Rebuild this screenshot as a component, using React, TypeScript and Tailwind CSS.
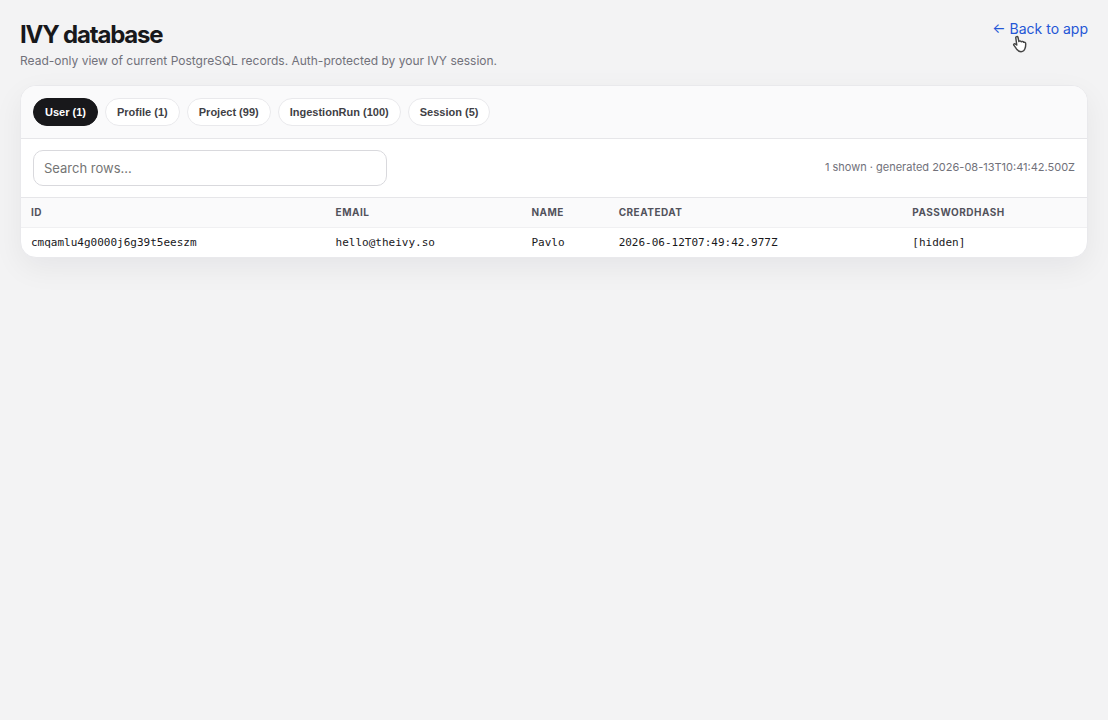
import React, { useState } from 'react';

const tabs = [
  { name: 'User', count: 1 },
  { name: 'Profile', count: 1 },
  { name: 'Project', count: 99 },
  { name: 'IngestionRun', count: 100 },
  { name: 'Session', count: 5 },
];

const columns = ['id', 'email', 'name', 'createdAt', 'passwordHash'];

const rows = [
  ['cmqamlu4g0000j6g39t5eeszm', 'hello@theivy.so', 'Pavlo', '2026-06-12T07:49:42.977Z', '[hidden]'],
];

const HandCursor: React.FC = () => (
  <svg
    className="pointer-events-none absolute left-[18px] top-3.5 h-5 w-5"
    viewBox="0 0 18 18"
    fill="#fff"
    stroke="#444"
    strokeWidth="1.3"
    strokeLinejoin="round"
    strokeLinecap="round"
    aria-hidden="true"
  >
    <path d="M6.1 9.9 5.2 3.5C5 2.2 6.9 1.8 7.2 3.1L8 6.8c.3-.8 1.9-.8 2.2.2.5-.6 1.9-.4 2.1.5.7-.4 1.8 0 1.8 1 .1 1.5 0 3-.5 4.2-.5 1.9-1.7 3.2-3.7 3.2-2.1 0-3.2-1.2-4.1-2.5-.7-1.1-1.5-2.1-2.2-3.1-.8-.9.1-1.8 1-1.4.6.3 1 .6 1.5 1Z" />
  </svg>
);

const App: React.FC = () => {
  const [active, setActive] = useState('User');
  const [query, setQuery] = useState('');

  const shown = rows.filter((row) => row.join(' ').toLowerCase().includes(query.toLowerCase()));

  return (
    <div className="min-h-screen bg-[#f3f3f4] p-5 font-['Inter',sans-serif] text-sm text-[#18181b]">
      <header className="mb-4 flex items-start justify-between gap-4">
        <div>
          <h1 className="text-2xl leading-[29px] font-bold tracking-tighter">IVY database</h1>
          <p className="mt-1 text-xs leading-4 text-[#71717a]">
            Read-only view of current PostgreSQL records. Auth-protected by your IVY session.
          </p>
        </div>
        <a href="#app" className="relative leading-[17px] text-[#2456d6]">
          ← Back to app
          <HandCursor />
        </a>
      </header>

      <main className="overflow-hidden rounded-2xl border border-[#e9e9ec] bg-white shadow-[0_10px_30px_rgba(24,24,40,0.06)]">
        <div className="flex flex-wrap gap-[7px] border-b border-[#e6e6e9] bg-[#fafafb] px-3 py-3">
          {tabs.map((tab) => (
            <button
              key={tab.name}
              type="button"
              onClick={() => setActive(tab.name)}
              className={`rounded-full border px-[11px] py-1 font-['Liberation_Sans',sans-serif] text-[11px] leading-[18px] font-bold ${
                active === tab.name
                  ? 'border-[#18181b] bg-[#18181b] text-white'
                  : 'border-[#e9e9ec] bg-white text-[#3f3f46]'
              }`}
            >
              {tab.name} ({tab.count})
            </button>
          ))}
        </div>

        <div className="flex items-center justify-between gap-3 border-b border-[#e6e6e9] px-3 py-[11px]">
          <input
            type="search"
            aria-label="Search rows"
            placeholder="Search rows..."
            value={query}
            onChange={(e) => setQuery(e.target.value)}
            className="h-9 w-[34%] rounded-[10px] border border-[#d9d9dd] bg-white px-2.5 text-[13px] outline-none placeholder:text-[#757575]"
          />
          <span className="text-[11px] text-[#71717a]">
            {shown.length} shown · generated 2026-08-13T10:41:42.500Z
          </span>
        </div>

        <table className="w-full text-left">
          <thead>
            <tr className="border-b border-[#f0f0f2] bg-[#fafafb]">
              {columns.map((column) => (
                <th key={column} className="px-2.5 py-2 text-[10px] leading-[13px] font-bold tracking-wider text-[#52525b] uppercase">
                  {column}
                </th>
              ))}
            </tr>
          </thead>
          <tbody>
            {shown.map((row) => (
              <tr key={row[0]}>
                {row.map((value, idx) => (
                  <td key={idx} className="px-2.5 py-2 font-['DejaVu_Sans_Mono',monospace] text-[11px] leading-[13px]">
                    {value}
                  </td>
                ))}
              </tr>
            ))}
          </tbody>
        </table>
      </main>
    </div>
  );
};

export default App;
